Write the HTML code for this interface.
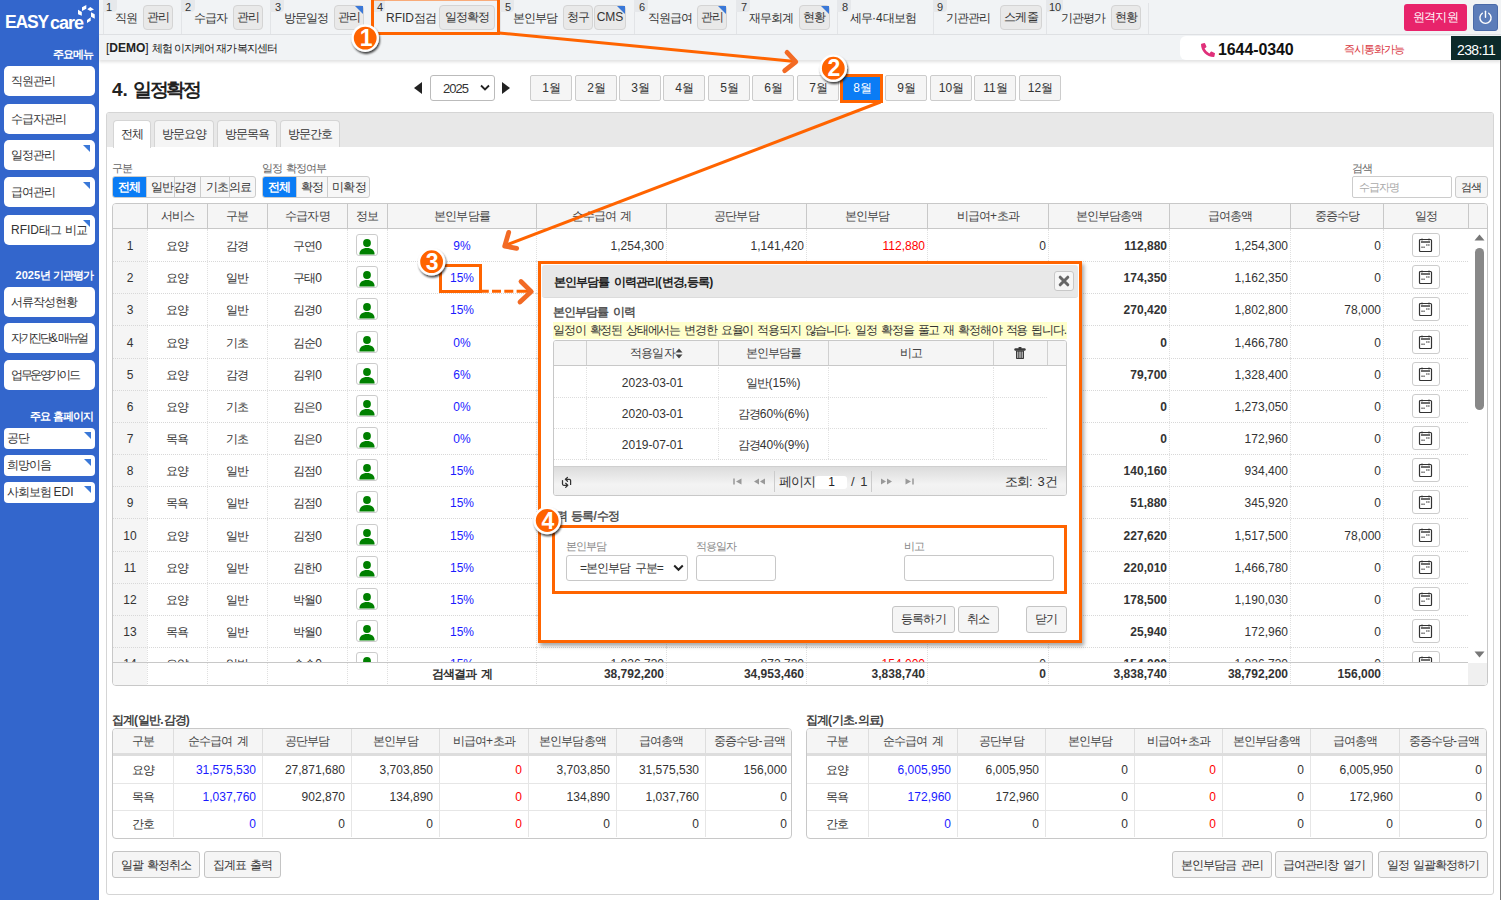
<!DOCTYPE html>
<html><head><meta charset="utf-8">
<style>
*{box-sizing:border-box;margin:0;padding:0}
html,body{width:1501px;height:900px;overflow:hidden}
body{position:relative;font-family:"Liberation Sans",sans-serif;font-size:12px;color:#333;background:#fff;letter-spacing:-0.08em;word-spacing:2px}
.n,.L{letter-spacing:0}
.a{position:absolute}
/* sidebar */
#side{left:0;top:0;width:99px;height:900px;background:#3366cc}
.sb{position:absolute;left:4px;width:91px;background:#fff;border-radius:5px;font-size:12px;color:#333;padding-left:7px;line-height:30px;height:30px;white-space:nowrap}
.sb.cr:after{content:"";position:absolute;right:5px;top:5px;border-top:7px solid #3a78d8;border-left:7px solid transparent}
.sbs{position:absolute;left:4px;width:91px;background:#fff;border-radius:4px;font-size:12px;color:#333;padding-left:3px;line-height:21px;height:21px;white-space:nowrap}
.sbs:after{content:"";position:absolute;right:4px;top:4px;border-top:7px solid #3a78d8;border-left:7px solid transparent}
.sbh{position:absolute;right:6px;color:#fff;font-size:11px;font-weight:bold;text-align:right;white-space:nowrap;letter-spacing:-0.1em;word-spacing:1.5px}
/* top nav */
#top{left:99px;top:0;width:1402px;height:35px;background:#f1f3f5;border-bottom:1px solid #dfe1e4}
#info{left:99px;top:35px;width:1402px;height:25px;background:#f1f3f5;box-shadow:0 2px 3px rgba(0,0,0,.12)}
.num{position:absolute;top:1px;font-size:11px;color:#333;letter-spacing:0}
.nt{position:absolute;top:10px;font-size:12px;color:#333;white-space:nowrap}
.nb{position:absolute;top:5px;height:25px;border:1px solid #d4d4d4;border-radius:4px;background:#e9e9e9;font-size:12px;color:#333;text-align:center;line-height:23px;white-space:nowrap}
.nb.cr:after{content:"";position:absolute;right:0;top:0;border-top:8px solid #3a78d8;border-left:8px solid transparent}
.sep{position:absolute;top:3px;width:1px;height:30px;background:#e2e4e7}
/* month buttons */
.mb{position:absolute;top:75px;height:26px;width:42px;border:1px solid #ccc;border-radius:2px;background:#f5f5f5;font-size:12px;color:#333;text-align:center;line-height:24px}
/* panel */
#panel{left:106px;top:112px;width:1388px;height:783px;border:1px solid #d5d5d5;border-radius:3px;background:#fff}
#phead{left:107px;top:113px;width:1386px;height:34px;background:#e8e8e8;border-radius:2px 2px 0 0}
.tab{position:absolute;top:120px;height:27px;border:1px solid #d5d5d5;border-bottom:none;border-radius:4px 4px 0 0;background:#f5f5f5;font-size:12px;color:#333;text-align:center;line-height:26px}
.tab.on{background:#fff;height:28px}
.lbl{position:absolute;font-size:11px;color:#666}
.bg{position:absolute;top:176px;height:22px;border:1px solid #ccc;border-radius:3px;background:#f7f7f7;overflow:hidden}
.bg span{position:absolute;top:0;height:20px;line-height:20px;text-align:center;font-size:11.5px;color:#333;border-left:1px solid #ccc}
.bg span.on{background:#0a7cf5;color:#fff;border-left:none;font-weight:bold}

.tbl{position:absolute;left:112px;top:203px;width:1376px;height:483px;border:1px solid #c8c8c8;border-radius:4px;overflow:hidden;background:#fff}
.hd{position:absolute;left:0;top:0;height:25px;width:100%;background:#f5f5f5;border-bottom:1px solid #c8c8c8}
.hc{position:absolute;top:0;height:24px;line-height:25px;text-align:center;font-size:12px;color:#444;border-left:1px solid #c8c8c8;white-space:nowrap}
.bd{position:absolute;left:0;top:25px;width:1355px;height:433px;overflow:hidden}
.r{position:absolute;left:0;width:1355px;height:33px;border-bottom:1px dotted #d8d8d8}
.c{position:absolute;top:0;height:32px;line-height:34px;font-size:12px;color:#333;white-space:nowrap;border-left:1px dotted #e0e0e0;text-align:center}
.c.rt{text-align:right;padding-right:2px;letter-spacing:0}
.c.b{font-weight:bold}
.ft{position:absolute;left:0;top:458px;width:1355px;height:24px;border-top:1px solid #c8c8c8}
.pi{position:absolute;left:8px;top:5px;width:22px;height:22px;border:1px solid #ccc;border-radius:3px;background:#fff;overflow:hidden}
.cal{position:absolute;left:28px;top:4px;width:28px;height:24px;border:1px solid #ccc;border-radius:3px;background:#fff}

.sm{position:absolute;top:728px;height:111px;border:1px solid #c8c8c8;border-radius:4px;background:#fff;overflow:hidden}
.sm .h{position:absolute;left:0;top:0;width:100%;height:27px;background:#f5f5f5;border-bottom:3px solid #ddd}
.sm .hc{height:24px;line-height:24px;color:#444}
.sm .sc{position:absolute;height:27px;line-height:28px;font-size:12px;color:#333;text-align:right;padding-right:6px;border-left:1px solid #e6e6e6;letter-spacing:0;white-space:nowrap}
.sm .sl{position:absolute;left:0;height:1px;width:100%;background:#e6e6e6}
.stl{position:absolute;top:712px;font-size:12px;font-weight:bold;color:#444}
.btn{position:absolute;top:851px;height:27px;border:1px solid #c4c4c4;border-radius:3px;background:#f5f5f5;font-size:12px;color:#333;text-align:center;line-height:27px;white-space:nowrap}

.md{position:absolute;left:538px;top:261px;width:544px;height:382px;border:3px solid #ff6400;background:#fff;box-shadow:2px 3px 4px rgba(0,0,0,.35)}
.mg{position:absolute;left:553px;top:340px;width:514px;height:156px;border:1px solid #c8c8c8;border-radius:3px;overflow:hidden;background:#fff}
.mg .gh{position:absolute;left:0;top:0;width:100%;height:25px;background:#f5f5f5;border-bottom:1px solid #c8c8c8}
.mg .gc{position:absolute;top:0;height:24px;line-height:25px;text-align:center;font-size:12px;color:#444;border-left:1px solid #d0d0d0}
.mg .gr{position:absolute;left:0;width:493px;height:31px;border-bottom:1px dotted #ddd}
.mg .gd{position:absolute;top:0;height:30px;line-height:32px;text-align:center;font-size:12px;color:#333;border-left:1px dotted #e2e2e2;white-space:nowrap}
.mg .pg{position:absolute;left:0;top:125px;width:100%;height:30px;background:linear-gradient(#dcdcdc,#f3f3f3 60%,#efefef);border-top:1px solid #cfcfcf}
.mlb{position:absolute;font-size:11px;color:#888}
.mbt{position:absolute;top:606px;height:27px;border:1px solid #c4c4c4;border-radius:3px;background:#f5f5f5;font-size:12px;color:#333;text-align:center;line-height:25px;white-space:nowrap}
</style></head><body>

<div id="side" class="a"></div>

<div class="a" style="left:0;top:0;width:99px;height:900px">
<svg class="a" style="left:0;top:0" width="99" height="32" viewBox="0 0 99 32">
<text x="5" y="28" font-family="Liberation Sans" font-weight="bold" font-size="17.5" fill="#fff" letter-spacing="-1.2">EASY</text>
<text x="50" y="28.5" font-family="Liberation Sans" font-weight="bold" font-size="18" fill="#fff" letter-spacing="-1">care</text>
<g fill="#fff"><path d="M78 9.7 L81.8 12 L81.8 15.7 L78 14.3Z"/><path d="M82 7.3 L86.3 5 L86.3 8.8 L82 11Z"/><path d="M87.3 9.3 L90.3 7 L94 9.5 L90.3 11Z"/><path d="M91 12.3 L94.7 14.3 L94.8 18.7 L91 16.7Z"/><path d="M87 20 L90.7 17.3 L90.7 20.7 L87 23Z"/></g>
</svg>
<div class="sbh" style="top:47px">주요메뉴</div>
<div class="sb" style="top:66px">직원관리</div>
<div class="sb" style="top:104px">수급자관리</div>
<div class="sb cr" style="top:140px">일정관리</div>
<div class="sb cr" style="top:177px">급여관리</div>
<div class="sb cr" style="top:215px;letter-spacing:-1.2px"><span class="L">RFID</span>태그 비교</div>
<div class="sbh" style="top:268px"><span class="L">2025</span>년 기관평가</div>
<div class="sb" style="top:287px">서류작성현황</div>
<div class="sb" style="top:323px;letter-spacing:-2.3px">자기진단<span class="L">&amp;</span>매뉴얼</div>
<div class="sb" style="top:360px;letter-spacing:-2.4px">업무운영가이드</div>
<div class="sbh" style="top:409px">주요 홈페이지</div>
<div class="sbs" style="top:428px">공단</div>
<div class="sbs" style="top:455px">희망이음</div>
<div class="sbs" style="top:482px;word-spacing:0">사회보험 <span class="L">EDI</span></div>
</div>
<div id="top" class="a"></div>
<div id="info" class="a"></div>
<div class="a" style="left:103px;top:0;width:14px;height:12px;background:#e6e8eb;border-radius:0 0 4px 0"></div><div class="a" style="left:103px;top:12px;width:1px;height:22px;background:#e2e4e7"></div><div class="a" style="left:181px;top:0;width:14px;height:12px;background:#e6e8eb;border-radius:0 0 4px 0"></div><div class="a" style="left:181px;top:12px;width:1px;height:22px;background:#e2e4e7"></div><div class="a" style="left:270px;top:0;width:14px;height:12px;background:#e6e8eb;border-radius:0 0 4px 0"></div><div class="a" style="left:270px;top:12px;width:1px;height:22px;background:#e2e4e7"></div><div class="a" style="left:371px;top:0;width:14px;height:12px;background:#e6e8eb;border-radius:0 0 4px 0"></div><div class="a" style="left:371px;top:12px;width:1px;height:22px;background:#e2e4e7"></div><div class="a" style="left:500px;top:0;width:14px;height:12px;background:#e6e8eb;border-radius:0 0 4px 0"></div><div class="a" style="left:500px;top:12px;width:1px;height:22px;background:#e2e4e7"></div><div class="a" style="left:634px;top:0;width:14px;height:12px;background:#e6e8eb;border-radius:0 0 4px 0"></div><div class="a" style="left:634px;top:12px;width:1px;height:22px;background:#e2e4e7"></div><div class="a" style="left:736px;top:0;width:14px;height:12px;background:#e6e8eb;border-radius:0 0 4px 0"></div><div class="a" style="left:736px;top:12px;width:1px;height:22px;background:#e2e4e7"></div><div class="a" style="left:837px;top:0;width:14px;height:12px;background:#e6e8eb;border-radius:0 0 4px 0"></div><div class="a" style="left:837px;top:12px;width:1px;height:22px;background:#e2e4e7"></div><div class="a" style="left:933px;top:0;width:14px;height:12px;background:#e6e8eb;border-radius:0 0 4px 0"></div><div class="a" style="left:933px;top:12px;width:1px;height:22px;background:#e2e4e7"></div><div class="a" style="left:1046px;top:0;width:17px;height:12px;background:#e6e8eb;border-radius:0 0 4px 0"></div><div class="a" style="left:1046px;top:12px;width:1px;height:22px;background:#e2e4e7"></div><div class="a" style="left:1148px;top:3px;width:1px;height:31px;background:#e2e4e7"></div>
<div class="num" style="left:106px">1</div><div class="nt" style="left:115px">직원</div><div class="nb" style="left:143px;width:30px">관리</div>
<div class="num" style="left:185px">2</div><div class="nt" style="left:194px">수급자</div><div class="nb" style="left:233px;width:30px">관리</div>
<div class="num" style="left:275px">3</div><div class="nt" style="left:284px">방문일정</div><div class="nb cr" style="left:334px;width:30px">관리</div>
<div class="num" style="left:377px">4</div><div class="nt" style="left:386px"><span class="L">RFID</span>점검</div><div class="nb" style="left:439px;width:56px">일정확정</div>
<div class="num" style="left:505px">5</div><div class="nt" style="left:513px">본인부담</div><div class="nb" style="left:563px;width:30px">청구</div><div class="nb cr" style="left:594px;width:32px;letter-spacing:0">CMS</div>
<div class="num" style="left:639px">6</div><div class="nt" style="left:648px">직원급여</div><div class="nb cr" style="left:697px;width:30px">관리</div>
<div class="num" style="left:741px">7</div><div class="nt" style="left:749px">재무회계</div><div class="nb cr" style="left:799px;width:31px">현황</div>
<div class="num" style="left:842px">8</div><div class="nt" style="left:850px">세무<span class="L">·4</span>대보험</div>
<div class="num" style="left:937px">9</div><div class="nt" style="left:946px">기관관리</div><div class="nb" style="left:1000px;width:42px">스케줄</div>
<div class="num" style="left:1049px">10</div><div class="nt" style="left:1061px">기관평가</div><div class="nb" style="left:1111px;width:30px">현황</div>
<div class="a" style="left:1404px;top:4px;width:63px;height:27px;background:#e8236b;border-radius:3px;color:#fff;font-size:12px;text-align:center;line-height:27px">원격지원</div>
<div class="a" style="left:1473px;top:4px;width:25px;height:27px;background:#5b7cb9;border-radius:3px;border:1px solid #4a6aa8"></div>
<svg class="a" style="left:1477px;top:9px" width="17" height="17" viewBox="0 0 17 17"><path d="M5.3 4.2 A5.6 5.6 0 1 0 11.7 4.2" fill="none" stroke="#fff" stroke-width="1.4" stroke-linecap="round"/><path d="M8.5 2.2 V8.3" stroke="#fff" stroke-width="1.4" stroke-linecap="round"/></svg>
<div class="a" style="left:106px;top:41px;font-size:11px;color:#222;white-space:nowrap;word-spacing:0"><span style="letter-spacing:0;font-size:12px">[<b>DEMO</b>] </span>체험 이지케어 재가복지센터</div>
<div class="a" style="left:1180px;top:36px;width:271px;height:24px;background:#fff;border-radius:6px 0 0 6px"></div>
<svg class="a" style="left:1201px;top:43px" width="14" height="14" viewBox="0 0 512 512"><path d="M497.39 361.8l-112-48a24 24 0 0 0-28 6.9l-49.6 60.6A370.66 370.66 0 0 1 130.6 204.11l60.6-49.6a23.94 23.94 0 0 0 6.9-28l-48-112A24.16 24.16 0 0 0 122.6.61l-104 24A24 24 0 0 0 0 48c0 256.5 207.9 464 464 464a24 24 0 0 0 23.4-18.6l24-104a24.290 24.29 0 0 0-14.01-27.6z" fill="#e0307a"/></svg>
<div class="a" style="left:1218px;top:40px;font-size:16px;font-weight:bold;color:#111;letter-spacing:-0.1px;line-height:20px">1644-0340</div>
<div class="a" style="left:1344px;top:42px;font-size:11px;color:#d9363e">즉시통화가능</div>
<div class="a" style="left:1451px;top:36px;width:50px;height:24px;background:#0c2a2a;color:#fff;font-size:14px;line-height:28px;padding-left:6px;letter-spacing:-0.6px">238:11</div>
<div class="a" style="left:1500px;top:60px;width:1px;height:840px;background:#777"></div>


<div class="a" style="left:112px;top:77px;font-size:19px;font-weight:bold;color:#222;letter-spacing:-0.12em;white-space:nowrap"><span style="letter-spacing:0">4.</span> 일정확정</div>
<svg class="a" style="left:413px;top:81px" width="10" height="14"><path d="M9 1 L1 7 L9 13Z" fill="#222"/></svg>
<div class="a" style="left:430px;top:75px;width:65px;height:26px;border:1px solid #bbb;border-radius:3px;background:#fff;font-size:13px;color:#333;line-height:26px;padding-left:12px">2025</div>
<svg class="a" style="left:480px;top:84px" width="10" height="8"><path d="M1 1.5 L5 5.5 L9 1.5" fill="none" stroke="#222" stroke-width="1.8"/></svg>
<svg class="a" style="left:501px;top:81px" width="10" height="14"><path d="M1 1 L9 7 L1 13Z" fill="#222"/></svg>
<div class="mb" style="left:530px"><span class="L">1</span>월</div>
<div class="mb" style="left:575px"><span class="L">2</span>월</div>
<div class="mb" style="left:619px"><span class="L">3</span>월</div>
<div class="mb" style="left:663px"><span class="L">4</span>월</div>
<div class="mb" style="left:708px"><span class="L">5</span>월</div>
<div class="mb" style="left:752px"><span class="L">6</span>월</div>
<div class="mb" style="left:797px"><span class="L">7</span>월</div>
<div class="mb" style="left:841px;background:#0a7cf5;color:#fff;border-color:#0a6fe0"><span class="L">8</span>월</div>
<div class="mb" style="left:885px"><span class="L">9</span>월</div>
<div class="mb" style="left:930px"><span class="L">10</span>월</div>
<div class="mb" style="left:974px"><span class="L">11</span>월</div>
<div class="mb" style="left:1019px"><span class="L">12</span>월</div>
<div id="panel" class="a"></div>
<div id="phead" class="a"></div>
<div class="tab on" style="left:113px;width:38px">전체</div>
<div class="tab" style="left:154px;width:60px">방문요양</div>
<div class="tab" style="left:217px;width:60px">방문목욕</div>
<div class="tab" style="left:280px;width:60px">방문간호</div>
<div class="lbl" style="left:112px;top:161px">구분</div>
<div class="lbl" style="left:262px;top:161px">일정 확정여부</div>
<div class="bg" style="left:112px;width:144px"><span class="on" style="left:0;width:33px">전체</span><span style="left:33px;width:54px">일반<span class="L">.</span>감경</span><span style="left:87px;width:56px">기초<span class="L">.</span>의료</span></div>
<div class="bg" style="left:262px;width:108px"><span class="on" style="left:0;width:33px">전체</span><span style="left:33px;width:31px">확정</span><span style="left:64px;width:43px">미확정</span></div>
<div class="lbl" style="left:1352px;top:161px">검색</div>
<div class="a" style="left:1352px;top:176px;width:100px;height:22px;border:1px solid #ccc;border-radius:2px;background:#fff;font-size:11px;color:#aaa;line-height:20px;padding-left:6px">수급자명</div>
<div class="a" style="left:1455px;top:176px;width:33px;height:22px;border:1px solid #ccc;border-radius:3px;background:#f5f5f5;font-size:11px;color:#333;line-height:20px;text-align:center">검색</div>
<div class="tbl"><div class="hd"><div class="hc" style="left:0px;width:34px;border-left:none"></div><div class="hc" style="left:34px;width:60px">서비스</div><div class="hc" style="left:94px;width:60px">구분</div><div class="hc" style="left:154px;width:80px">수급자명</div><div class="hc" style="left:234px;width:40px">정보</div><div class="hc" style="left:274px;width:149px">본인부담률</div><div class="hc" style="left:423px;width:130px">순수급여 계</div><div class="hc" style="left:553px;width:140px">공단부담</div><div class="hc" style="left:693px;width:121px">본인부담</div><div class="hc" style="left:814px;width:121px">비급여<span class="L">+</span>초과</div><div class="hc" style="left:935px;width:121px">본인부담총액</div><div class="hc" style="left:1056px;width:121px">급여총액</div><div class="hc" style="left:1177px;width:93px">중증수당</div><div class="hc" style="left:1270px;width:85px">일정</div><div class="hc" style="left:1355px;width:21px"></div></div><div class="bd"><div class="a" style="left:0;top:0;width:34px;height:433px;background:#f5f5f5"></div><div class="r" style="top:0.00px"><div class="c n" style="left:0px;width:34px;border-left:none">1</div><div class="c" style="left:34px;width:60px">요양</div><div class="c" style="left:94px;width:60px">감경</div><div class="c" style="left:154px;width:80px">구연<span class="L">0</span></div><div class="c" style="left:234px;width:40px"><div class="pi"><svg width="20" height="20" viewBox="0 0 20 20" style="position:absolute;left:0;top:0"><circle cx="10" cy="8" r="3.9" fill="#008000"/><path d="M2.4 19.4 C2.6 15.2 5.2 13.1 10 13.1 C14.8 13.1 17.4 15.2 17.6 19.4Z" fill="#008000"/></svg></div></div><div class="c" style="left:274px;width:149px;color:#1a1aff;letter-spacing:0">9%</div><div class="c rt" style="left:423px;width:130px">1,254,300</div><div class="c rt" style="left:553px;width:140px">1,141,420</div><div class="c rt" style="left:693px;width:121px;color:#f00">112,880</div><div class="c rt" style="left:814px;width:121px">0</div><div class="c rt b" style="left:935px;width:121px">112,880</div><div class="c rt" style="left:1056px;width:121px">1,254,300</div><div class="c rt" style="left:1177px;width:93px">0</div><div class="c" style="left:1270px;width:85px"><div class="cal"><svg width="15" height="15" viewBox="0 0 15 15" style="position:absolute;left:5px;top:3px"><rect x="1.5" y="2.5" width="12" height="12" rx="1" fill="none" stroke="#333" stroke-width="1.2"/><rect x="3" y="4.3" width="9" height="1.4" fill="#333"/><path d="M4 1.5v2M11 1.5v2" stroke="#333" stroke-width="1"/><rect x="3.4" y="9.6" width="1.3" height="1.2" fill="#333"/><rect x="5.4" y="9.6" width="1.3" height="1.2" fill="#333"/><rect x="8.2" y="7.4" width="1.3" height="1.2" fill="#333"/><rect x="10.2" y="7.4" width="1.3" height="1.2" fill="#333"/></svg></div></div></div><div class="r" style="top:32.17px"><div class="c n" style="left:0px;width:34px;border-left:none">2</div><div class="c" style="left:34px;width:60px">요양</div><div class="c" style="left:94px;width:60px">일반</div><div class="c" style="left:154px;width:80px">구태<span class="L">0</span></div><div class="c" style="left:234px;width:40px"><div class="pi"><svg width="20" height="20" viewBox="0 0 20 20" style="position:absolute;left:0;top:0"><circle cx="10" cy="8" r="3.9" fill="#008000"/><path d="M2.4 19.4 C2.6 15.2 5.2 13.1 10 13.1 C14.8 13.1 17.4 15.2 17.6 19.4Z" fill="#008000"/></svg></div></div><div class="c" style="left:274px;width:149px;color:#1a1aff;letter-spacing:0">15%</div><div class="c rt" style="left:423px;width:130px">1,162,350</div><div class="c rt" style="left:553px;width:140px">988,000</div><div class="c rt" style="left:693px;width:121px;color:#f00">174,350</div><div class="c rt" style="left:814px;width:121px">0</div><div class="c rt b" style="left:935px;width:121px">174,350</div><div class="c rt" style="left:1056px;width:121px">1,162,350</div><div class="c rt" style="left:1177px;width:93px">0</div><div class="c" style="left:1270px;width:85px"><div class="cal"><svg width="15" height="15" viewBox="0 0 15 15" style="position:absolute;left:5px;top:3px"><rect x="1.5" y="2.5" width="12" height="12" rx="1" fill="none" stroke="#333" stroke-width="1.2"/><rect x="3" y="4.3" width="9" height="1.4" fill="#333"/><path d="M4 1.5v2M11 1.5v2" stroke="#333" stroke-width="1"/><rect x="3.4" y="9.6" width="1.3" height="1.2" fill="#333"/><rect x="5.4" y="9.6" width="1.3" height="1.2" fill="#333"/><rect x="8.2" y="7.4" width="1.3" height="1.2" fill="#333"/><rect x="10.2" y="7.4" width="1.3" height="1.2" fill="#333"/></svg></div></div></div><div class="r" style="top:64.34px"><div class="c n" style="left:0px;width:34px;border-left:none">3</div><div class="c" style="left:34px;width:60px">요양</div><div class="c" style="left:94px;width:60px">일반</div><div class="c" style="left:154px;width:80px">김경<span class="L">0</span></div><div class="c" style="left:234px;width:40px"><div class="pi"><svg width="20" height="20" viewBox="0 0 20 20" style="position:absolute;left:0;top:0"><circle cx="10" cy="8" r="3.9" fill="#008000"/><path d="M2.4 19.4 C2.6 15.2 5.2 13.1 10 13.1 C14.8 13.1 17.4 15.2 17.6 19.4Z" fill="#008000"/></svg></div></div><div class="c" style="left:274px;width:149px;color:#1a1aff;letter-spacing:0">15%</div><div class="c rt" style="left:423px;width:130px">1,802,800</div><div class="c rt" style="left:553px;width:140px">1,532,380</div><div class="c rt" style="left:693px;width:121px;color:#f00">270,420</div><div class="c rt" style="left:814px;width:121px">0</div><div class="c rt b" style="left:935px;width:121px">270,420</div><div class="c rt" style="left:1056px;width:121px">1,802,800</div><div class="c rt" style="left:1177px;width:93px">78,000</div><div class="c" style="left:1270px;width:85px"><div class="cal"><svg width="15" height="15" viewBox="0 0 15 15" style="position:absolute;left:5px;top:3px"><rect x="1.5" y="2.5" width="12" height="12" rx="1" fill="none" stroke="#333" stroke-width="1.2"/><rect x="3" y="4.3" width="9" height="1.4" fill="#333"/><path d="M4 1.5v2M11 1.5v2" stroke="#333" stroke-width="1"/><rect x="3.4" y="9.6" width="1.3" height="1.2" fill="#333"/><rect x="5.4" y="9.6" width="1.3" height="1.2" fill="#333"/><rect x="8.2" y="7.4" width="1.3" height="1.2" fill="#333"/><rect x="10.2" y="7.4" width="1.3" height="1.2" fill="#333"/></svg></div></div></div><div class="r" style="top:96.51px"><div class="c n" style="left:0px;width:34px;border-left:none">4</div><div class="c" style="left:34px;width:60px">요양</div><div class="c" style="left:94px;width:60px">기초</div><div class="c" style="left:154px;width:80px">김순<span class="L">0</span></div><div class="c" style="left:234px;width:40px"><div class="pi"><svg width="20" height="20" viewBox="0 0 20 20" style="position:absolute;left:0;top:0"><circle cx="10" cy="8" r="3.9" fill="#008000"/><path d="M2.4 19.4 C2.6 15.2 5.2 13.1 10 13.1 C14.8 13.1 17.4 15.2 17.6 19.4Z" fill="#008000"/></svg></div></div><div class="c" style="left:274px;width:149px;color:#1a1aff;letter-spacing:0">0%</div><div class="c rt" style="left:423px;width:130px">1,466,780</div><div class="c rt" style="left:553px;width:140px">1,466,780</div><div class="c rt" style="left:693px;width:121px">0</div><div class="c rt" style="left:814px;width:121px">0</div><div class="c rt b" style="left:935px;width:121px">0</div><div class="c rt" style="left:1056px;width:121px">1,466,780</div><div class="c rt" style="left:1177px;width:93px">0</div><div class="c" style="left:1270px;width:85px"><div class="cal"><svg width="15" height="15" viewBox="0 0 15 15" style="position:absolute;left:5px;top:3px"><rect x="1.5" y="2.5" width="12" height="12" rx="1" fill="none" stroke="#333" stroke-width="1.2"/><rect x="3" y="4.3" width="9" height="1.4" fill="#333"/><path d="M4 1.5v2M11 1.5v2" stroke="#333" stroke-width="1"/><rect x="3.4" y="9.6" width="1.3" height="1.2" fill="#333"/><rect x="5.4" y="9.6" width="1.3" height="1.2" fill="#333"/><rect x="8.2" y="7.4" width="1.3" height="1.2" fill="#333"/><rect x="10.2" y="7.4" width="1.3" height="1.2" fill="#333"/></svg></div></div></div><div class="r" style="top:128.68px"><div class="c n" style="left:0px;width:34px;border-left:none">5</div><div class="c" style="left:34px;width:60px">요양</div><div class="c" style="left:94px;width:60px">감경</div><div class="c" style="left:154px;width:80px">김위<span class="L">0</span></div><div class="c" style="left:234px;width:40px"><div class="pi"><svg width="20" height="20" viewBox="0 0 20 20" style="position:absolute;left:0;top:0"><circle cx="10" cy="8" r="3.9" fill="#008000"/><path d="M2.4 19.4 C2.6 15.2 5.2 13.1 10 13.1 C14.8 13.1 17.4 15.2 17.6 19.4Z" fill="#008000"/></svg></div></div><div class="c" style="left:274px;width:149px;color:#1a1aff;letter-spacing:0">6%</div><div class="c rt" style="left:423px;width:130px">1,328,400</div><div class="c rt" style="left:553px;width:140px">1,248,700</div><div class="c rt" style="left:693px;width:121px;color:#f00">79,700</div><div class="c rt" style="left:814px;width:121px">0</div><div class="c rt b" style="left:935px;width:121px">79,700</div><div class="c rt" style="left:1056px;width:121px">1,328,400</div><div class="c rt" style="left:1177px;width:93px">0</div><div class="c" style="left:1270px;width:85px"><div class="cal"><svg width="15" height="15" viewBox="0 0 15 15" style="position:absolute;left:5px;top:3px"><rect x="1.5" y="2.5" width="12" height="12" rx="1" fill="none" stroke="#333" stroke-width="1.2"/><rect x="3" y="4.3" width="9" height="1.4" fill="#333"/><path d="M4 1.5v2M11 1.5v2" stroke="#333" stroke-width="1"/><rect x="3.4" y="9.6" width="1.3" height="1.2" fill="#333"/><rect x="5.4" y="9.6" width="1.3" height="1.2" fill="#333"/><rect x="8.2" y="7.4" width="1.3" height="1.2" fill="#333"/><rect x="10.2" y="7.4" width="1.3" height="1.2" fill="#333"/></svg></div></div></div><div class="r" style="top:160.85px"><div class="c n" style="left:0px;width:34px;border-left:none">6</div><div class="c" style="left:34px;width:60px">요양</div><div class="c" style="left:94px;width:60px">기초</div><div class="c" style="left:154px;width:80px">김은<span class="L">0</span></div><div class="c" style="left:234px;width:40px"><div class="pi"><svg width="20" height="20" viewBox="0 0 20 20" style="position:absolute;left:0;top:0"><circle cx="10" cy="8" r="3.9" fill="#008000"/><path d="M2.4 19.4 C2.6 15.2 5.2 13.1 10 13.1 C14.8 13.1 17.4 15.2 17.6 19.4Z" fill="#008000"/></svg></div></div><div class="c" style="left:274px;width:149px;color:#1a1aff;letter-spacing:0">0%</div><div class="c rt" style="left:423px;width:130px">1,273,050</div><div class="c rt" style="left:553px;width:140px">1,273,050</div><div class="c rt" style="left:693px;width:121px">0</div><div class="c rt" style="left:814px;width:121px">0</div><div class="c rt b" style="left:935px;width:121px">0</div><div class="c rt" style="left:1056px;width:121px">1,273,050</div><div class="c rt" style="left:1177px;width:93px">0</div><div class="c" style="left:1270px;width:85px"><div class="cal"><svg width="15" height="15" viewBox="0 0 15 15" style="position:absolute;left:5px;top:3px"><rect x="1.5" y="2.5" width="12" height="12" rx="1" fill="none" stroke="#333" stroke-width="1.2"/><rect x="3" y="4.3" width="9" height="1.4" fill="#333"/><path d="M4 1.5v2M11 1.5v2" stroke="#333" stroke-width="1"/><rect x="3.4" y="9.6" width="1.3" height="1.2" fill="#333"/><rect x="5.4" y="9.6" width="1.3" height="1.2" fill="#333"/><rect x="8.2" y="7.4" width="1.3" height="1.2" fill="#333"/><rect x="10.2" y="7.4" width="1.3" height="1.2" fill="#333"/></svg></div></div></div><div class="r" style="top:193.02px"><div class="c n" style="left:0px;width:34px;border-left:none">7</div><div class="c" style="left:34px;width:60px">목욕</div><div class="c" style="left:94px;width:60px">기초</div><div class="c" style="left:154px;width:80px">김은<span class="L">0</span></div><div class="c" style="left:234px;width:40px"><div class="pi"><svg width="20" height="20" viewBox="0 0 20 20" style="position:absolute;left:0;top:0"><circle cx="10" cy="8" r="3.9" fill="#008000"/><path d="M2.4 19.4 C2.6 15.2 5.2 13.1 10 13.1 C14.8 13.1 17.4 15.2 17.6 19.4Z" fill="#008000"/></svg></div></div><div class="c" style="left:274px;width:149px;color:#1a1aff;letter-spacing:0">0%</div><div class="c rt" style="left:423px;width:130px">172,960</div><div class="c rt" style="left:553px;width:140px">172,960</div><div class="c rt" style="left:693px;width:121px">0</div><div class="c rt" style="left:814px;width:121px">0</div><div class="c rt b" style="left:935px;width:121px">0</div><div class="c rt" style="left:1056px;width:121px">172,960</div><div class="c rt" style="left:1177px;width:93px">0</div><div class="c" style="left:1270px;width:85px"><div class="cal"><svg width="15" height="15" viewBox="0 0 15 15" style="position:absolute;left:5px;top:3px"><rect x="1.5" y="2.5" width="12" height="12" rx="1" fill="none" stroke="#333" stroke-width="1.2"/><rect x="3" y="4.3" width="9" height="1.4" fill="#333"/><path d="M4 1.5v2M11 1.5v2" stroke="#333" stroke-width="1"/><rect x="3.4" y="9.6" width="1.3" height="1.2" fill="#333"/><rect x="5.4" y="9.6" width="1.3" height="1.2" fill="#333"/><rect x="8.2" y="7.4" width="1.3" height="1.2" fill="#333"/><rect x="10.2" y="7.4" width="1.3" height="1.2" fill="#333"/></svg></div></div></div><div class="r" style="top:225.19px"><div class="c n" style="left:0px;width:34px;border-left:none">8</div><div class="c" style="left:34px;width:60px">요양</div><div class="c" style="left:94px;width:60px">일반</div><div class="c" style="left:154px;width:80px">김점<span class="L">0</span></div><div class="c" style="left:234px;width:40px"><div class="pi"><svg width="20" height="20" viewBox="0 0 20 20" style="position:absolute;left:0;top:0"><circle cx="10" cy="8" r="3.9" fill="#008000"/><path d="M2.4 19.4 C2.6 15.2 5.2 13.1 10 13.1 C14.8 13.1 17.4 15.2 17.6 19.4Z" fill="#008000"/></svg></div></div><div class="c" style="left:274px;width:149px;color:#1a1aff;letter-spacing:0">15%</div><div class="c rt" style="left:423px;width:130px">934,400</div><div class="c rt" style="left:553px;width:140px">794,240</div><div class="c rt" style="left:693px;width:121px;color:#f00">140,160</div><div class="c rt" style="left:814px;width:121px">0</div><div class="c rt b" style="left:935px;width:121px">140,160</div><div class="c rt" style="left:1056px;width:121px">934,400</div><div class="c rt" style="left:1177px;width:93px">0</div><div class="c" style="left:1270px;width:85px"><div class="cal"><svg width="15" height="15" viewBox="0 0 15 15" style="position:absolute;left:5px;top:3px"><rect x="1.5" y="2.5" width="12" height="12" rx="1" fill="none" stroke="#333" stroke-width="1.2"/><rect x="3" y="4.3" width="9" height="1.4" fill="#333"/><path d="M4 1.5v2M11 1.5v2" stroke="#333" stroke-width="1"/><rect x="3.4" y="9.6" width="1.3" height="1.2" fill="#333"/><rect x="5.4" y="9.6" width="1.3" height="1.2" fill="#333"/><rect x="8.2" y="7.4" width="1.3" height="1.2" fill="#333"/><rect x="10.2" y="7.4" width="1.3" height="1.2" fill="#333"/></svg></div></div></div><div class="r" style="top:257.36px"><div class="c n" style="left:0px;width:34px;border-left:none">9</div><div class="c" style="left:34px;width:60px">목욕</div><div class="c" style="left:94px;width:60px">일반</div><div class="c" style="left:154px;width:80px">김점<span class="L">0</span></div><div class="c" style="left:234px;width:40px"><div class="pi"><svg width="20" height="20" viewBox="0 0 20 20" style="position:absolute;left:0;top:0"><circle cx="10" cy="8" r="3.9" fill="#008000"/><path d="M2.4 19.4 C2.6 15.2 5.2 13.1 10 13.1 C14.8 13.1 17.4 15.2 17.6 19.4Z" fill="#008000"/></svg></div></div><div class="c" style="left:274px;width:149px;color:#1a1aff;letter-spacing:0">15%</div><div class="c rt" style="left:423px;width:130px">345,920</div><div class="c rt" style="left:553px;width:140px">294,040</div><div class="c rt" style="left:693px;width:121px;color:#f00">51,880</div><div class="c rt" style="left:814px;width:121px">0</div><div class="c rt b" style="left:935px;width:121px">51,880</div><div class="c rt" style="left:1056px;width:121px">345,920</div><div class="c rt" style="left:1177px;width:93px">0</div><div class="c" style="left:1270px;width:85px"><div class="cal"><svg width="15" height="15" viewBox="0 0 15 15" style="position:absolute;left:5px;top:3px"><rect x="1.5" y="2.5" width="12" height="12" rx="1" fill="none" stroke="#333" stroke-width="1.2"/><rect x="3" y="4.3" width="9" height="1.4" fill="#333"/><path d="M4 1.5v2M11 1.5v2" stroke="#333" stroke-width="1"/><rect x="3.4" y="9.6" width="1.3" height="1.2" fill="#333"/><rect x="5.4" y="9.6" width="1.3" height="1.2" fill="#333"/><rect x="8.2" y="7.4" width="1.3" height="1.2" fill="#333"/><rect x="10.2" y="7.4" width="1.3" height="1.2" fill="#333"/></svg></div></div></div><div class="r" style="top:289.53px"><div class="c n" style="left:0px;width:34px;border-left:none">10</div><div class="c" style="left:34px;width:60px">요양</div><div class="c" style="left:94px;width:60px">일반</div><div class="c" style="left:154px;width:80px">김정<span class="L">0</span></div><div class="c" style="left:234px;width:40px"><div class="pi"><svg width="20" height="20" viewBox="0 0 20 20" style="position:absolute;left:0;top:0"><circle cx="10" cy="8" r="3.9" fill="#008000"/><path d="M2.4 19.4 C2.6 15.2 5.2 13.1 10 13.1 C14.8 13.1 17.4 15.2 17.6 19.4Z" fill="#008000"/></svg></div></div><div class="c" style="left:274px;width:149px;color:#1a1aff;letter-spacing:0">15%</div><div class="c rt" style="left:423px;width:130px">1,517,500</div><div class="c rt" style="left:553px;width:140px">1,289,880</div><div class="c rt" style="left:693px;width:121px;color:#f00">227,620</div><div class="c rt" style="left:814px;width:121px">0</div><div class="c rt b" style="left:935px;width:121px">227,620</div><div class="c rt" style="left:1056px;width:121px">1,517,500</div><div class="c rt" style="left:1177px;width:93px">78,000</div><div class="c" style="left:1270px;width:85px"><div class="cal"><svg width="15" height="15" viewBox="0 0 15 15" style="position:absolute;left:5px;top:3px"><rect x="1.5" y="2.5" width="12" height="12" rx="1" fill="none" stroke="#333" stroke-width="1.2"/><rect x="3" y="4.3" width="9" height="1.4" fill="#333"/><path d="M4 1.5v2M11 1.5v2" stroke="#333" stroke-width="1"/><rect x="3.4" y="9.6" width="1.3" height="1.2" fill="#333"/><rect x="5.4" y="9.6" width="1.3" height="1.2" fill="#333"/><rect x="8.2" y="7.4" width="1.3" height="1.2" fill="#333"/><rect x="10.2" y="7.4" width="1.3" height="1.2" fill="#333"/></svg></div></div></div><div class="r" style="top:321.70px"><div class="c n" style="left:0px;width:34px;border-left:none">11</div><div class="c" style="left:34px;width:60px">요양</div><div class="c" style="left:94px;width:60px">일반</div><div class="c" style="left:154px;width:80px">김한<span class="L">0</span></div><div class="c" style="left:234px;width:40px"><div class="pi"><svg width="20" height="20" viewBox="0 0 20 20" style="position:absolute;left:0;top:0"><circle cx="10" cy="8" r="3.9" fill="#008000"/><path d="M2.4 19.4 C2.6 15.2 5.2 13.1 10 13.1 C14.8 13.1 17.4 15.2 17.6 19.4Z" fill="#008000"/></svg></div></div><div class="c" style="left:274px;width:149px;color:#1a1aff;letter-spacing:0">15%</div><div class="c rt" style="left:423px;width:130px">1,466,780</div><div class="c rt" style="left:553px;width:140px">1,246,770</div><div class="c rt" style="left:693px;width:121px;color:#f00">220,010</div><div class="c rt" style="left:814px;width:121px">0</div><div class="c rt b" style="left:935px;width:121px">220,010</div><div class="c rt" style="left:1056px;width:121px">1,466,780</div><div class="c rt" style="left:1177px;width:93px">0</div><div class="c" style="left:1270px;width:85px"><div class="cal"><svg width="15" height="15" viewBox="0 0 15 15" style="position:absolute;left:5px;top:3px"><rect x="1.5" y="2.5" width="12" height="12" rx="1" fill="none" stroke="#333" stroke-width="1.2"/><rect x="3" y="4.3" width="9" height="1.4" fill="#333"/><path d="M4 1.5v2M11 1.5v2" stroke="#333" stroke-width="1"/><rect x="3.4" y="9.6" width="1.3" height="1.2" fill="#333"/><rect x="5.4" y="9.6" width="1.3" height="1.2" fill="#333"/><rect x="8.2" y="7.4" width="1.3" height="1.2" fill="#333"/><rect x="10.2" y="7.4" width="1.3" height="1.2" fill="#333"/></svg></div></div></div><div class="r" style="top:353.87px"><div class="c n" style="left:0px;width:34px;border-left:none">12</div><div class="c" style="left:34px;width:60px">요양</div><div class="c" style="left:94px;width:60px">일반</div><div class="c" style="left:154px;width:80px">박월<span class="L">0</span></div><div class="c" style="left:234px;width:40px"><div class="pi"><svg width="20" height="20" viewBox="0 0 20 20" style="position:absolute;left:0;top:0"><circle cx="10" cy="8" r="3.9" fill="#008000"/><path d="M2.4 19.4 C2.6 15.2 5.2 13.1 10 13.1 C14.8 13.1 17.4 15.2 17.6 19.4Z" fill="#008000"/></svg></div></div><div class="c" style="left:274px;width:149px;color:#1a1aff;letter-spacing:0">15%</div><div class="c rt" style="left:423px;width:130px">1,190,030</div><div class="c rt" style="left:553px;width:140px">1,011,530</div><div class="c rt" style="left:693px;width:121px;color:#f00">178,500</div><div class="c rt" style="left:814px;width:121px">0</div><div class="c rt b" style="left:935px;width:121px">178,500</div><div class="c rt" style="left:1056px;width:121px">1,190,030</div><div class="c rt" style="left:1177px;width:93px">0</div><div class="c" style="left:1270px;width:85px"><div class="cal"><svg width="15" height="15" viewBox="0 0 15 15" style="position:absolute;left:5px;top:3px"><rect x="1.5" y="2.5" width="12" height="12" rx="1" fill="none" stroke="#333" stroke-width="1.2"/><rect x="3" y="4.3" width="9" height="1.4" fill="#333"/><path d="M4 1.5v2M11 1.5v2" stroke="#333" stroke-width="1"/><rect x="3.4" y="9.6" width="1.3" height="1.2" fill="#333"/><rect x="5.4" y="9.6" width="1.3" height="1.2" fill="#333"/><rect x="8.2" y="7.4" width="1.3" height="1.2" fill="#333"/><rect x="10.2" y="7.4" width="1.3" height="1.2" fill="#333"/></svg></div></div></div><div class="r" style="top:386.04px"><div class="c n" style="left:0px;width:34px;border-left:none">13</div><div class="c" style="left:34px;width:60px">목욕</div><div class="c" style="left:94px;width:60px">일반</div><div class="c" style="left:154px;width:80px">박월<span class="L">0</span></div><div class="c" style="left:234px;width:40px"><div class="pi"><svg width="20" height="20" viewBox="0 0 20 20" style="position:absolute;left:0;top:0"><circle cx="10" cy="8" r="3.9" fill="#008000"/><path d="M2.4 19.4 C2.6 15.2 5.2 13.1 10 13.1 C14.8 13.1 17.4 15.2 17.6 19.4Z" fill="#008000"/></svg></div></div><div class="c" style="left:274px;width:149px;color:#1a1aff;letter-spacing:0">15%</div><div class="c rt" style="left:423px;width:130px">172,960</div><div class="c rt" style="left:553px;width:140px">147,020</div><div class="c rt" style="left:693px;width:121px;color:#f00">25,940</div><div class="c rt" style="left:814px;width:121px">0</div><div class="c rt b" style="left:935px;width:121px">25,940</div><div class="c rt" style="left:1056px;width:121px">172,960</div><div class="c rt" style="left:1177px;width:93px">0</div><div class="c" style="left:1270px;width:85px"><div class="cal"><svg width="15" height="15" viewBox="0 0 15 15" style="position:absolute;left:5px;top:3px"><rect x="1.5" y="2.5" width="12" height="12" rx="1" fill="none" stroke="#333" stroke-width="1.2"/><rect x="3" y="4.3" width="9" height="1.4" fill="#333"/><path d="M4 1.5v2M11 1.5v2" stroke="#333" stroke-width="1"/><rect x="3.4" y="9.6" width="1.3" height="1.2" fill="#333"/><rect x="5.4" y="9.6" width="1.3" height="1.2" fill="#333"/><rect x="8.2" y="7.4" width="1.3" height="1.2" fill="#333"/><rect x="10.2" y="7.4" width="1.3" height="1.2" fill="#333"/></svg></div></div></div><div class="r" style="top:418.21px"><div class="c n" style="left:0px;width:34px;border-left:none">14</div><div class="c" style="left:34px;width:60px">요양</div><div class="c" style="left:94px;width:60px">일반</div><div class="c" style="left:154px;width:80px">손순<span class="L">0</span></div><div class="c" style="left:234px;width:40px"><div class="pi"><svg width="20" height="20" viewBox="0 0 20 20" style="position:absolute;left:0;top:0"><circle cx="10" cy="8" r="3.9" fill="#008000"/><path d="M2.4 19.4 C2.6 15.2 5.2 13.1 10 13.1 C14.8 13.1 17.4 15.2 17.6 19.4Z" fill="#008000"/></svg></div></div><div class="c" style="left:274px;width:149px;color:#1a1aff;letter-spacing:0">15%</div><div class="c rt" style="left:423px;width:130px">1,026,730</div><div class="c rt" style="left:553px;width:140px">872,730</div><div class="c rt" style="left:693px;width:121px;color:#f00">154,000</div><div class="c rt" style="left:814px;width:121px">0</div><div class="c rt b" style="left:935px;width:121px">154,000</div><div class="c rt" style="left:1056px;width:121px">1,026,730</div><div class="c rt" style="left:1177px;width:93px">0</div><div class="c" style="left:1270px;width:85px"><div class="cal"><svg width="15" height="15" viewBox="0 0 15 15" style="position:absolute;left:5px;top:3px"><rect x="1.5" y="2.5" width="12" height="12" rx="1" fill="none" stroke="#333" stroke-width="1.2"/><rect x="3" y="4.3" width="9" height="1.4" fill="#333"/><path d="M4 1.5v2M11 1.5v2" stroke="#333" stroke-width="1"/><rect x="3.4" y="9.6" width="1.3" height="1.2" fill="#333"/><rect x="5.4" y="9.6" width="1.3" height="1.2" fill="#333"/><rect x="8.2" y="7.4" width="1.3" height="1.2" fill="#333"/><rect x="10.2" y="7.4" width="1.3" height="1.2" fill="#333"/></svg></div></div></div></div><div class="a" style="left:1355px;top:25px;width:20px;height:458px;background:#fff"></div><svg class="a" style="left:1361px;top:30px" width="11" height="7"><path d="M0.5 6.5 L5.5 0.5 L10.5 6.5Z" fill="#777"/></svg><div class="a" style="left:1362px;top:44px;width:9px;height:162px;background:#888;border-radius:5px"></div><svg class="a" style="left:1361px;top:447px" width="11" height="7"><path d="M0.5 0.5 L5.5 6.5 L10.5 0.5Z" fill="#777"/></svg><div class="ft"><div class="c b" style="left:0px;width:34px;height:23px;line-height:23px;border-left:none;background:#f5f5f5"></div><div class="c b" style="left:34px;width:60px;height:23px;line-height:23px"></div><div class="c b" style="left:94px;width:60px;height:23px;line-height:23px"></div><div class="c b" style="left:154px;width:80px;height:23px;line-height:23px"></div><div class="c b" style="left:234px;width:40px;height:23px;line-height:23px"></div><div class="c b" style="left:274px;width:149px;height:23px;line-height:23px">검색결과 계</div><div class="c b rt" style="left:423px;width:130px;height:23px;line-height:23px">38,792,200</div><div class="c b rt" style="left:553px;width:140px;height:23px;line-height:23px">34,953,460</div><div class="c b rt" style="left:693px;width:121px;height:23px;line-height:23px">3,838,740</div><div class="c b rt" style="left:814px;width:121px;height:23px;line-height:23px">0</div><div class="c b rt" style="left:935px;width:121px;height:23px;line-height:23px">3,838,740</div><div class="c b rt" style="left:1056px;width:121px;height:23px;line-height:23px">38,792,200</div><div class="c b rt" style="left:1177px;width:93px;height:23px;line-height:23px">156,000</div><div class="c b rt" style="left:1270px;width:85px;height:23px;line-height:23px"></div><div class="c" style="left:1355px;width:21px;height:23px;background:#f0f0f0;border-left:none"></div></div></div>

<div class="stl" style="left:112px">집계<span class="L">(</span>일반<span class="L">.</span>감경<span class="L">)</span></div><div class="sm" style="left:112px;width:680px"><div class="h"><div class="hc" style="left:0px;width:60px;border-left:none">구분</div><div class="hc" style="left:60px;width:89px;border-left:1px solid #ddd">순수급여 계</div><div class="hc" style="left:149px;width:89px;border-left:1px solid #ddd">공단부담</div><div class="hc" style="left:238px;width:88px;border-left:1px solid #ddd">본인부담</div><div class="hc" style="left:326px;width:89px;border-left:1px solid #ddd">비급여<span class="L">+</span>초과</div><div class="hc" style="left:415px;width:88px;border-left:1px solid #ddd">본인부담총액</div><div class="hc" style="left:503px;width:89px;border-left:1px solid #ddd">급여총액</div><div class="hc" style="left:592px;width:88px;border-left:1px solid #ddd">중증수당<span class="L">-</span>금액</div></div><div class="sc" style="left:0px;top:27px;width:60px;text-align:center;padding-right:0;border-left:none;letter-spacing:-0.08em">요양</div><div class="sc" style="left:60px;top:27px;width:89px;color:#1a1aff">31,575,530</div><div class="sc" style="left:149px;top:27px;width:89px">27,871,680</div><div class="sc" style="left:238px;top:27px;width:88px">3,703,850</div><div class="sc" style="left:326px;top:27px;width:89px;color:#f00">0</div><div class="sc" style="left:415px;top:27px;width:88px">3,703,850</div><div class="sc" style="left:503px;top:27px;width:89px">31,575,530</div><div class="sc" style="left:592px;top:27px;width:88px">156,000</div><div class="sl" style="top:54px"></div><div class="sc" style="left:0px;top:54px;width:60px;text-align:center;padding-right:0;border-left:none;letter-spacing:-0.08em">목욕</div><div class="sc" style="left:60px;top:54px;width:89px;color:#1a1aff">1,037,760</div><div class="sc" style="left:149px;top:54px;width:89px">902,870</div><div class="sc" style="left:238px;top:54px;width:88px">134,890</div><div class="sc" style="left:326px;top:54px;width:89px;color:#f00">0</div><div class="sc" style="left:415px;top:54px;width:88px">134,890</div><div class="sc" style="left:503px;top:54px;width:89px">1,037,760</div><div class="sc" style="left:592px;top:54px;width:88px">0</div><div class="sl" style="top:81px"></div><div class="sc" style="left:0px;top:81px;width:60px;text-align:center;padding-right:0;border-left:none;letter-spacing:-0.08em">간호</div><div class="sc" style="left:60px;top:81px;width:89px;color:#1a1aff">0</div><div class="sc" style="left:149px;top:81px;width:89px">0</div><div class="sc" style="left:238px;top:81px;width:88px">0</div><div class="sc" style="left:326px;top:81px;width:89px;color:#f00">0</div><div class="sc" style="left:415px;top:81px;width:88px">0</div><div class="sc" style="left:503px;top:81px;width:89px">0</div><div class="sc" style="left:592px;top:81px;width:88px">0</div></div><div class="stl" style="left:806px">집계<span class="L">(</span>기초<span class="L">.</span>의료<span class="L">)</span></div><div class="sm" style="left:806px;width:681px"><div class="h"><div class="hc" style="left:0px;width:61px;border-left:none">구분</div><div class="hc" style="left:61px;width:89px;border-left:1px solid #ddd">순수급여 계</div><div class="hc" style="left:150px;width:88px;border-left:1px solid #ddd">공단부담</div><div class="hc" style="left:238px;width:89px;border-left:1px solid #ddd">본인부담</div><div class="hc" style="left:327px;width:88px;border-left:1px solid #ddd">비급여<span class="L">+</span>초과</div><div class="hc" style="left:415px;width:88px;border-left:1px solid #ddd">본인부담총액</div><div class="hc" style="left:503px;width:89px;border-left:1px solid #ddd">급여총액</div><div class="hc" style="left:592px;width:89px;border-left:1px solid #ddd">중증수당<span class="L">-</span>금액</div></div><div class="sc" style="left:0px;top:27px;width:61px;text-align:center;padding-right:0;border-left:none;letter-spacing:-0.08em">요양</div><div class="sc" style="left:61px;top:27px;width:89px;color:#1a1aff">6,005,950</div><div class="sc" style="left:150px;top:27px;width:88px">6,005,950</div><div class="sc" style="left:238px;top:27px;width:89px">0</div><div class="sc" style="left:327px;top:27px;width:88px;color:#f00">0</div><div class="sc" style="left:415px;top:27px;width:88px">0</div><div class="sc" style="left:503px;top:27px;width:89px">6,005,950</div><div class="sc" style="left:592px;top:27px;width:89px">0</div><div class="sl" style="top:54px"></div><div class="sc" style="left:0px;top:54px;width:61px;text-align:center;padding-right:0;border-left:none;letter-spacing:-0.08em">목욕</div><div class="sc" style="left:61px;top:54px;width:89px;color:#1a1aff">172,960</div><div class="sc" style="left:150px;top:54px;width:88px">172,960</div><div class="sc" style="left:238px;top:54px;width:89px">0</div><div class="sc" style="left:327px;top:54px;width:88px;color:#f00">0</div><div class="sc" style="left:415px;top:54px;width:88px">0</div><div class="sc" style="left:503px;top:54px;width:89px">172,960</div><div class="sc" style="left:592px;top:54px;width:89px">0</div><div class="sl" style="top:81px"></div><div class="sc" style="left:0px;top:81px;width:61px;text-align:center;padding-right:0;border-left:none;letter-spacing:-0.08em">간호</div><div class="sc" style="left:61px;top:81px;width:89px;color:#1a1aff">0</div><div class="sc" style="left:150px;top:81px;width:88px">0</div><div class="sc" style="left:238px;top:81px;width:89px">0</div><div class="sc" style="left:327px;top:81px;width:88px;color:#f00">0</div><div class="sc" style="left:415px;top:81px;width:88px">0</div><div class="sc" style="left:503px;top:81px;width:89px">0</div><div class="sc" style="left:592px;top:81px;width:89px">0</div></div><div class="btn" style="left:112px;width:88px">일괄 확정취소</div><div class="btn" style="left:204px;width:77px">집계표 출력</div><div class="btn" style="left:1172px;width:100px">본인부담금 관리</div><div class="btn" style="left:1275px;width:98px">급여관리창 열기</div><div class="btn" style="left:1378px;width:110px">일정 일괄확정하기</div>
<div class="md"></div><div class="a" style="left:542px;top:265px;width:536px;height:33px;background:#e8e8e8;border-radius:3px;border-bottom:1px solid #dcdcdc"></div><div class="a" style="left:554px;top:274px;font-size:12px;font-weight:bold;color:#222;white-space:nowrap">본인부담률 이력관리<span class="L">(</span>변경<span class="L">,</span>등록<span class="L">)</span></div><div class="a" style="left:1054px;top:271px;width:20px;height:20px;border:1px solid #c8c8c8;border-radius:3px;background:#f6f6f6"></div><svg class="a" style="left:1058px;top:275px" width="12" height="12" viewBox="0 0 12 12"><path d="M2.2 2.2 L9.8 9.8 M9.8 2.2 L2.2 9.8" stroke="#666" stroke-width="3" stroke-linecap="round"/></svg><div class="a" style="left:553px;top:304px;font-size:12px;font-weight:bold;color:#555;white-space:nowrap">본인부담률 이력</div><div class="a" style="left:553px;top:322px;width:514px;height:17px;background:#ffffcc;font-size:12px;color:#333;line-height:17px;white-space:nowrap;overflow:hidden;letter-spacing:-0.1em">일정이 확정된 상태에서는 변경한 요율이 적용되지 않습니다<span class="L">.</span> 일정 확정을 풀고 재 확정해야 적용 됩니다<span class="L">.</span></div><div class="mg"><div class="gh"><div class="gc" style="left:0px;width:32px;border-left:none"></div><div class="gc" style="left:32px;width:132px">적용일자</div><div class="gc" style="left:164px;width:110px">본인부담률</div><div class="gc" style="left:274px;width:165px">비고</div><div class="gc" style="left:439px;width:54px"></div><div class="gc" style="left:493px;width:20px"></div></div><svg class="a" style="left:121px;top:7px" width="8" height="11" viewBox="0 0 8 11"><path d="M0.5 4.5 L4 0.5 L7.5 4.5Z M0.5 6.5 L4 10.5 L7.5 6.5Z" fill="#444"/></svg><svg class="a" style="left:460px;top:6px" width="12" height="13" viewBox="0 0 12 13"><rect x="4.3" y="0" width="3.4" height="2" rx="1" fill="#3a3a3a"/><rect x="0.3" y="1.2" width="11.4" height="2.6" rx="1.2" fill="#3a3a3a"/><path d="M2 3.6 H10 V11.2 Q10 11.9 9.3 11.9 H2.7 Q2 11.9 2 11.2Z" fill="#3a3a3a"/><rect x="3.2" y="4.6" width="0.9" height="6.3" fill="#c8c8c8"/><rect x="4.6" y="4.6" width="2.8" height="6.3" fill="#999"/><rect x="7.9" y="4.6" width="0.9" height="6.3" fill="#c8c8c8"/></svg><div class="gr" style="top:26px"><div class="gd" style="left:0px;width:32px;border-left:none"></div><div class="gd" style="left:32px;width:132px;letter-spacing:0">2023-03-01</div><div class="gd" style="left:164px;width:110px">일반<span class="L">(15%)</span></div><div class="gd" style="left:274px;width:165px"></div><div class="gd" style="left:439px;width:54px"></div></div><div class="gr" style="top:57px"><div class="gd" style="left:0px;width:32px;border-left:none"></div><div class="gd" style="left:32px;width:132px;letter-spacing:0">2020-03-01</div><div class="gd" style="left:164px;width:110px">감경<span class="L">60%(6%)</span></div><div class="gd" style="left:274px;width:165px"></div><div class="gd" style="left:439px;width:54px"></div></div><div class="gr" style="top:88px"><div class="gd" style="left:0px;width:32px;border-left:none"></div><div class="gd" style="left:32px;width:132px;letter-spacing:0">2019-07-01</div><div class="gd" style="left:164px;width:110px">감경<span class="L">40%(9%)</span></div><div class="gd" style="left:274px;width:165px"></div><div class="gd" style="left:439px;width:54px"></div></div><div class="pg"><svg class="a" style="left:7px;top:9px" width="12" height="13" viewBox="0 0 12 13"><g fill="none" stroke="#333" stroke-width="1.25" stroke-linecap="round" stroke-linejoin="round"><path d="M4.4 3.3 H8.4 Q9.6 3.3 9.6 4.5 V8.4 M6.5 1.4 L4.4 3.3 L6.5 5.3"/><path d="M1.5 4.5 V8.1 Q1.5 9.3 2.7 9.3 H6.8 M4.7 7.3 L6.8 9.3 L4.7 11.4"/></g></svg><svg class="a" style="left:179px;top:10px" width="10" height="9" viewBox="0 0 10 9"><path d="M1 1.5V7.5" stroke="#999" stroke-width="1.5"/><path d="M8.5 1.5 L3 4.5 L8.5 7.5Z" fill="#999"/></svg><svg class="a" style="left:199px;top:10px" width="13" height="9" viewBox="0 0 13 9"><path d="M6 1.5 L1 4.5 L6 7.5Z M12 1.5 L7 4.5 L12 7.5Z" fill="#999"/></svg><div class="a" style="left:220px;top:4px;width:1px;height:21px;background:#ccc"></div><div class="a" style="left:225px;top:6px;font-size:13px;color:#333;white-space:nowrap">페이지</div><div class="a" style="left:261px;top:9px;width:32px;height:13px;background:#fff;border-radius:3px;font-size:12px;color:#222;text-align:center;line-height:13px">1</div><div class="a" style="left:297px;top:7px;font-size:13px;color:#333;white-space:nowrap;letter-spacing:0">/ 1</div><div class="a" style="left:317px;top:4px;width:1px;height:21px;background:#ccc"></div><svg class="a" style="left:326px;top:10px" width="13" height="9" viewBox="0 0 13 9"><path d="M1 1.5 L6 4.5 L1 7.5Z M7 1.5 L12 4.5 L7 7.5Z" fill="#999"/></svg><svg class="a" style="left:350px;top:10px" width="10" height="9" viewBox="0 0 10 9"><path d="M1.5 1.5 L7 4.5 L1.5 7.5Z" fill="#999"/><path d="M9 1.5V7.5" stroke="#999" stroke-width="1.5"/></svg><div class="a" style="left:451px;top:6px;font-size:13px;color:#333;white-space:nowrap">조회<span class="L">:</span> <span class="L">3</span>건</div></div></div><div class="a" style="left:545px;top:508px;font-size:12px;font-weight:bold;color:#555;white-space:nowrap">이력 등록<span class="L">/</span>수정</div><div class="a" style="left:552px;top:525px;width:515px;height:69px;border:3px solid #ff6400"></div><div class="mlb" style="left:566px;top:539px">본인부담</div><div class="mlb" style="left:696px;top:539px">적용일자</div><div class="mlb" style="left:904px;top:539px">비고</div><div class="a" style="left:566px;top:555px;width:122px;height:26px;border:1px solid #c8c8c8;border-radius:3px;background:#fff;font-size:12px;color:#333;line-height:25px;padding-left:13px;white-space:nowrap">=본인부담 구분=</div><svg class="a" style="left:673px;top:564px" width="11" height="8" viewBox="0 0 11 8"><path d="M1.2 1.5 L5.5 5.8 L9.8 1.5" fill="none" stroke="#222" stroke-width="2"/></svg><div class="a" style="left:696px;top:555px;width:80px;height:26px;border:1px solid #c8c8c8;border-radius:3px;background:#fff"></div><div class="a" style="left:904px;top:555px;width:150px;height:26px;border:1px solid #c8c8c8;border-radius:3px;background:#fff"></div><div class="mbt" style="left:892px;width:63px">등록하기</div><div class="mbt" style="left:958px;width:41px">취소</div><div class="mbt" style="left:1026px;width:41px">닫기</div>
<svg class="a" style="left:0;top:0" width="1501" height="900" viewBox="0 0 1501 900">
<defs><filter id="sh" x="-30%" y="-30%" width="160%" height="160%"><feGaussianBlur in="SourceAlpha" stdDeviation="1"/><feOffset dx="1" dy="1.5"/><feComponentTransfer><feFuncA type="linear" slope="0.75"/></feComponentTransfer><feMerge><feMergeNode/><feMergeNode in="SourceGraphic"/></feMerge></filter></defs>
<g fill="none" stroke="#ff6400" stroke-width="3">
<rect x="372.5" y="-1" width="126" height="34.5"/>
<rect x="841.5" y="75.5" width="40" height="26"/>
<rect x="440.5" y="265.5" width="40" height="26"/>
<path d="M499 33 L795 61.5"/>
<path d="M880.5 102 L505 245.5"/>
<path d="M481 291.3 H488.8 M492 291.3 H501 M504.3 291.3 H513.3 M516.6 291.3 H530"/>
</g>
<g fill="none" stroke="#f26a24" stroke-width="4.8" stroke-linecap="round" stroke-linejoin="round">
<path d="M787 52.4 L795.8 61.8 L784.7 70.7"/>
<path d="M508.7 232.4 L504.7 246.2 L516.7 248.4"/>
<path d="M521 281.5 L531.3 291.6 L520 302"/>
</g>
<g filter="url(#sh)">
<circle cx="365.2" cy="38.1" r="12.6" fill="#ff6400" stroke="#fff" stroke-width="2.4"/>
<circle cx="833.3" cy="68.2" r="12.6" fill="#ff6400" stroke="#fff" stroke-width="2.4"/>
<circle cx="431.6" cy="261.7" r="12.6" fill="#ff6400" stroke="#fff" stroke-width="2.4"/>
<circle cx="547.2" cy="520.5" r="12.6" fill="#ff6400" stroke="#fff" stroke-width="2.4"/>
</g>
<g fill="#fff" font-family="Liberation Sans" font-weight="bold" font-size="23" text-anchor="middle">
<text x="365.6" y="46.4">1</text>
<text x="833.3" y="76.4">2</text>
<text x="431.6" y="269.9">3</text>
<text x="547.4" y="528.7">4</text>
</g>
</svg>
</body></html>
